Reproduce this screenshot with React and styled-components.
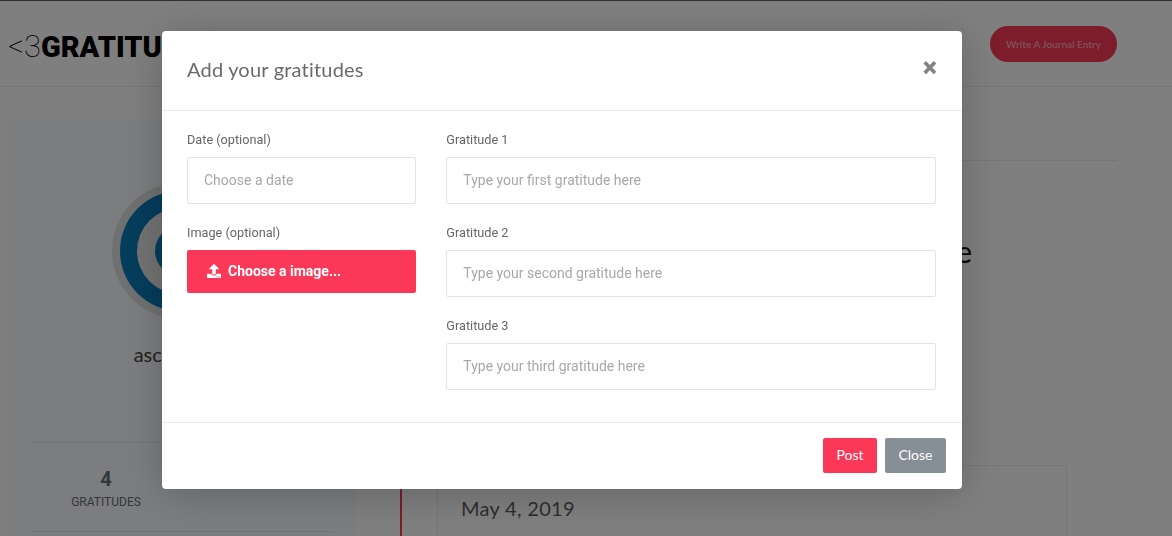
import React from "react";
import styled, { createGlobalStyle } from "styled-components";
import { FaUpload } from "react-icons/fa";

const GlobalStyle = createGlobalStyle`
  html, body {
    margin: 0;
    height: 100%;
    overflow: hidden;
    background: #fff;
  }
  * { box-sizing: border-box; }
`;

const Page = styled.div`
  height: 536px;
  overflow: hidden;
  border-top: 1px solid #58606c;
  font-family: "Lato", "Noto Sans", sans-serif;
`;

const Header = styled.header`
  height: 86px;
  display: flex;
  align-items: center;
  justify-content: space-between;
  padding: 0 55px 0 8px;
  border-bottom: 1px solid #eee;
`;

const Logo = styled.div`
  display: flex;
  align-items: baseline;
  font-family: "Roboto", sans-serif;
  font-size: 29px;
  line-height: 1;
  color: #000;
  margin-top: 6px;
`;

const LogoLight = styled.span`
  font-weight: 100;
  font-size: 31px;
`;

const LogoBold = styled.span`
  font-weight: 900;
`;

const JournalButton = styled.button`
  width: 127px;
  height: 36px;
  border: 0;
  border-radius: 18px;
  background: #fb3857;
  color: rgba(255, 255, 255, 0.5);
  font-family: "Lato", sans-serif;
  font-size: 10px;
  font-weight: 700;
`;

const Content = styled.div`
  display: flex;
  align-items: flex-start;
  padding: 33px 55px 0 8px;
  gap: 43px;
`;

const Sidebar = styled.aside`
  flex: 0 0 349px;
  height: 600px;
  padding: 63px 23px 0;
  background: #f6fafe;
  display: flex;
  flex-direction: column;
  align-items: center;
`;

const Avatar = styled.svg`
  display: block;
  width: 136px;
  height: 136px;
  flex: none;
  margin-left: -6px;
`;

const UserName = styled.div`
  margin-top: 23px;
  height: 32px;
  font-size: 20px;
  font-weight: 400;
  line-height: 24px;
  color: #444;
`;

const Stats = styled.div`
  align-self: stretch;
  height: 88px;
  margin-top: 68px;
  border-top: 1px solid #e6e9ec;
  border-bottom: 1px solid #e6e9ec;
  box-sizing: content-box;
  display: flex;
`;

const Stat = styled.div`
  width: 150px;
  padding-top: 24px;
  text-align: center;
  font-family: "Roboto", sans-serif;
  color: #6b6f73;
`;

const StatValue = styled.div`
  font-size: 20px;
  font-weight: 700;
  line-height: 24px;
`;

const StatLabel = styled.div`
  margin-top: 2px;
  font-size: 12px;
  line-height: 18px;
`;

const Main = styled.main`
  flex: 1;
  min-width: 0;
`;

const Tabs = styled.div`
  height: 41px;
  border-bottom: 1px solid #eee;
`;

const Heading = styled.h1`
  margin: 0;
  padding: 72px 145px 0 0;
  height: 144px;
  font-size: 30px;
  font-weight: 400;
  line-height: 36px;
  text-align: right;
  color: #111;
  white-space: nowrap;
`;

const Timeline = styled.section`
  border-left: 2px solid #fb3857;
  margin-top: 60px;
  padding: 100px 0 0 35px;
`;

const EntryCard = styled.article`
  width: 630px;
  height: 200px;
  padding: 28px 23px;
  background: #fff;
  border: 1px solid #eee;
`;

const EntryDate = styled.div`
  font-size: 20px;
  line-height: 28px;
  letter-spacing: 0.3px;
  color: #5c5c5c;
`;

const Overlay = styled.div`
  position: fixed;
  inset: 0;
  display: flex;
  justify-content: center;
  align-items: flex-start;
  padding: 31px 48px 0 0;
  background: rgba(0, 0, 0, 0.5);
`;

const Modal = styled.div`
  width: 800px;
  flex: none;
  background: #fff;
  border-radius: 4px;
  box-shadow: 0 5px 40px rgba(0, 0, 0, 0.22);
`;

const ModalHeader = styled.div`
  height: 80px;
  padding: 0 25px;
  display: flex;
  align-items: center;
  justify-content: space-between;
  border-bottom: 1px solid #e9ecef;
`;

const ModalTitle = styled.h5`
  margin: -4px 0 0;
  font-family: "Lato", sans-serif;
  font-size: 20px;
  font-weight: 400;
  letter-spacing: 0.2px;
  color: #6a6a6a;
`;

const CloseX = styled.button`
  margin: -4px 0 0;
  padding: 0;
  border: 0;
  background: transparent;
  font-family: "Roboto", sans-serif;
  font-size: 27px;
  font-weight: 900;
  line-height: 1;
  color: #828282;
`;

const ModalBody = styled.div`
  display: grid;
  grid-template-columns: 229.33px 489.67px;
  column-gap: 30px;
  padding: 20px 25px 32px;
`;

const Column = styled.div`
  display: flex;
  flex-direction: column;
  gap: 20px;
`;

const Field = styled.div`
  display: flex;
  flex-direction: column;
`;

const Label = styled.label`
  height: 26px;
  font-family: "Roboto", sans-serif;
  font-size: 12.7px;
  line-height: 18px;
  color: #666;
`;

const Input = styled.input`
  height: 47px;
  padding: 0 16px 2px;
  border: 1px solid #e3e3e3;
  border-radius: 2px;
  font-family: "Roboto", sans-serif;
  font-size: 14px;
  color: #444;

  &::placeholder {
    color: #a8a8a8;
    opacity: 1;
  }
`;

const UploadButton = styled.button`
  height: 43px;
  padding: 0 0 2px 20px;
  display: flex;
  align-items: center;
  gap: 7px;
  border: 0;
  border-radius: 2px;
  background: #fb3857;
  color: #fff;
  font-family: "Roboto", sans-serif;
  font-size: 14px;
  font-weight: 700;
`;

const ModalFooter = styled.div`
  height: 67px;
  padding: 15px 16px 0 0;
  display: flex;
  justify-content: flex-end;
  gap: 8px;
  border-top: 1px solid #e9ecef;
`;

const FooterButton = styled.button`
  height: 35px;
  width: ${({ $width }) => $width}px;
  padding: 0 0 2px;
  border: 0;
  border-radius: 2px;
  background: ${({ $bg }) => $bg};
  color: #fff;
  font-family: "Lato", sans-serif;
  font-size: 14px;
`;

export default function App() {
  return (
    <>
      <GlobalStyle />
      <Page>
        <Header>
          <Logo>
            <LogoLight>&lt;3</LogoLight>
            <LogoBold>GRATITUDE</LogoBold>
          </Logo>
          <JournalButton>Write A Journal Entry</JournalButton>
        </Header>
        <Content>
          <Sidebar>
            <Avatar viewBox="0 0 136 136">
              <circle cx="68" cy="68" r="68" fill="#dfe1e1" />
              <circle cx="68" cy="68" r="60" fill="#0a7ab8" />
              <circle cx="68" cy="68" r="43" fill="#e6e6e6" />
              <circle cx="68" cy="68" r="25" fill="#0a7ab8" />
            </Avatar>
            <UserName>ascendants</UserName>
            <Stats>
              <Stat>
                <StatValue>4</StatValue>
                <StatLabel>GRATITUDES</StatLabel>
              </Stat>
            </Stats>
          </Sidebar>
          <Main>
            <Tabs />
            <Heading>Your gratitude journal timeline</Heading>
            <Timeline>
              <EntryCard>
                <EntryDate>May 4, 2019</EntryDate>
              </EntryCard>
            </Timeline>
          </Main>
        </Content>
      </Page>
      <Overlay>
        <Modal>
          <ModalHeader>
            <ModalTitle>Add your gratitudes</ModalTitle>
            <CloseX aria-label="Close">×</CloseX>
          </ModalHeader>
          <ModalBody>
            <Column>
              <Field>
                <Label>Date (optional)</Label>
                <Input placeholder="Choose a date" />
              </Field>
              <Field>
                <Label>Image (optional)</Label>
                <UploadButton>
                  <FaUpload size={14} />
                  Choose a image...
                </UploadButton>
              </Field>
            </Column>
            <Column>
              <Field>
                <Label>Gratitude 1</Label>
                <Input placeholder="Type your first gratitude here" />
              </Field>
              <Field>
                <Label>Gratitude 2</Label>
                <Input placeholder="Type your second gratitude here" />
              </Field>
              <Field>
                <Label>Gratitude 3</Label>
                <Input placeholder="Type your third gratitude here" />
              </Field>
            </Column>
          </ModalBody>
          <ModalFooter>
            <FooterButton $width={54} $bg="#fb3857">Post</FooterButton>
            <FooterButton $width={61} $bg="#868e96">Close</FooterButton>
          </ModalFooter>
        </Modal>
      </Overlay>
    </>
  );
}
